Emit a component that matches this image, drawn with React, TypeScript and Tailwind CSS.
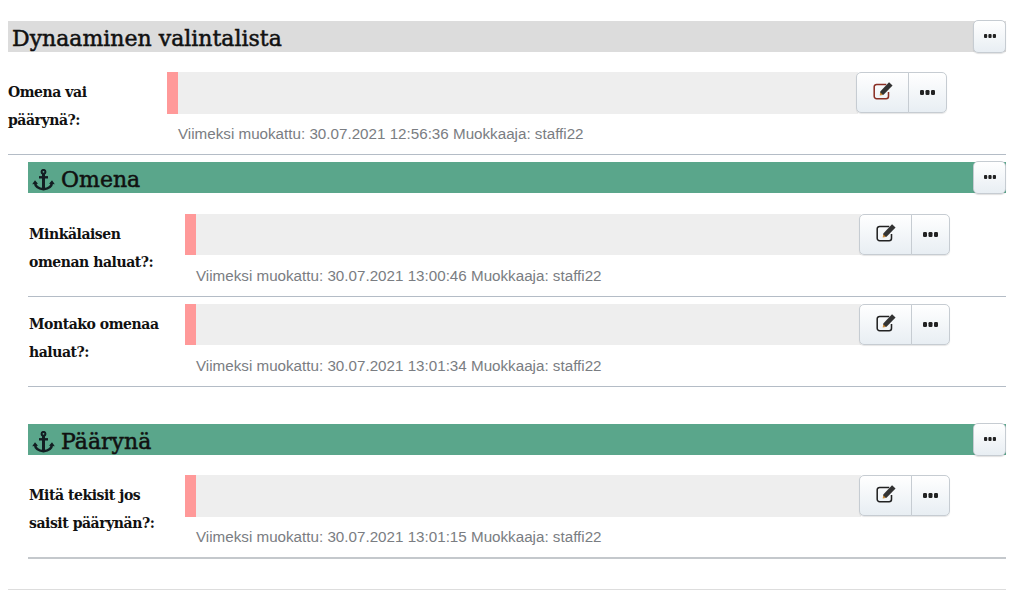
const slab = "font-['DejaVu_Serif',serif]";
const sans = "font-['Liberation_Sans',Arial,sans-serif]";
const btn =
  "flex items-center justify-center border border-[#c6ccd2] bg-gradient-to-b from-white to-[#e8eef3] text-[#222]";

function Dots({ size }: { size: "sm" | "lg" }) {
  const cls = size === "sm" ? "h-[4px] w-[12px]" : "h-[5px] w-[15px]";
  return (
    <svg viewBox="0 0 15 5" className={cls} fill="#222">
      <rect x="0" y="0" width="4" height="5" rx="1.2" />
      <rect x="5.5" y="0" width="4" height="5" rx="1.2" />
      <rect x="11" y="0" width="4" height="5" rx="1.2" />
    </svg>
  );
}

function EditIcon({ accent }: { accent?: boolean }) {
  return (
    <svg viewBox="0 0 20 18" className="-mt-[3px] h-[20px] w-[22px]" fill="none">
      <path
        d="M13 3H4.2A2.2 2.2 0 0 0 2 5.2v8.6A2.2 2.2 0 0 0 4.2 16h8.6a2.2 2.2 0 0 0 2.2-2.2V10"
        stroke={accent ? "#8a2f24" : "#222"}
        strokeWidth="1.4"
      />
      <path d="M15.5 1l3.2 3-8.2 8.4-3.2.2.2-3.2z" fill="#333" />
      <path d="M7 13l.5-2.8 2.4 2.4z" fill="#c98a3a" />
    </svg>
  );
}

function AnchorIcon() {
  return (
    <svg viewBox="0 0 23 22" className="h-[22px] w-[23px] shrink-0" fill="none" stroke="#131d22">
      <circle cx="11.5" cy="2.8" r="1.9" strokeWidth="2" />
      <path d="M11.5 5v15.5" strokeWidth="3" />
      <path d="M7 8.3h9" strokeWidth="2.4" />
      <path d="M3 13.5c.3 4.2 4.5 6.3 8.5 6.8 4-.5 8.2-2.6 8.5-6.8" strokeWidth="2.6" />
      <path d="M0.2 15.2l2.8-4 3 3.6zM22.8 15.2l-2.8-4-3 3.6z" fill="#131d22" stroke="none" />
    </svg>
  );
}

function HeaderMenu() {
  return (
    <button
      type="button"
      className={`${btn} -mt-px h-[33px] w-[33px] shrink-0 rounded-[5px] shadow-[0_1px_1px_rgba(0,0,0,0.12)]`}
    >
      <Dots size="sm" />
    </button>
  );
}

function SectionHeader({ title, bg, anchor }: { title: string; bg: string; anchor?: boolean }) {
  return (
    <div className={`flex h-[31px] items-center ${bg}`}>
      <h2
        className={`${slab} flex flex-1 items-center gap-[6px] pl-1 pt-[4px] text-[22px] text-[#111] [-webkit-text-stroke:0.5px_#111]`}
      >
        {anchor && <AnchorIcon />}
        {title}
      </h2>
      <HeaderMenu />
    </div>
  );
}

function Field({
  label,
  stamp,
  labelW,
  barW,
  barH = "h-[42px]",
  accent,
  line,
}: {
  label: string[];
  stamp: string;
  labelW: string;
  barW: string;
  barH?: string;
  accent?: boolean;
  line: string;
}) {
  return (
    <div className={line}>
      <div className="flex">
        <div className={`${labelW} shrink-0 pt-[6px] ${slab} text-[14px] font-bold leading-[28px] tracking-[-0.45px] text-[#111]`}>
          {label.map((l) => (
            <div key={l}>{l}</div>
          ))}
        </div>
        <div>
          <div className="flex h-[42px] items-start">
            <div className={`${barW} ${barH} shrink-0 border-l-[11px] border-[#ff9999] bg-[#eeeeee]`} />
            <div className="-ml-[2px] flex h-[41px] shrink-0 rounded-[5px] shadow-[0_1px_1px_rgba(0,0,0,0.1)]">
              <button type="button" className={`${btn} w-[53px] rounded-l-[5px]`}>
                <EditIcon accent={accent} />
              </button>
              <button type="button" className={`${btn} -ml-px w-[39px] rounded-r-[5px]`}>
                <Dots size="lg" />
              </button>
            </div>
          </div>
          <p className={`${sans} mt-[11px] pl-[11px] text-[15.2px] leading-[17px] text-[#7a7d82]`}>
            Viimeksi muokattu: {stamp} Muokkaaja: staffi22
          </p>
        </div>
      </div>
    </div>
  );
}

export default function App() {
  return (
    <div className="h-[590px] w-[1020px] overflow-hidden bg-white pl-2 pr-[14px] pt-[21px]">
      <SectionHeader title="Dynaaminen valintalista" bg="bg-[#dcdcdc]" />
      <div className="mt-5">
        <Field
          label={["Omena vai", "päärynä?:"]}
          stamp="30.07.2021 12:56:36"
          labelW="w-[159px]"
          barW="w-[691px]"
          accent
          line="h-[83px] border-b border-[#b4bcc6]"
        />
      </div>

      <div className="ml-5 mt-[7px]">
        <SectionHeader title="Omena" bg="bg-[#5aa68b]" anchor />
        <div className="mt-[21px]">
          <Field
            label={["Minkälaisen", "omenan haluat?:"]}
            stamp="30.07.2021 13:00:46"
            labelW="w-[157px] pl-px"
            barW="w-[676px]"
            barH="h-[41px]"
            line="h-[83px] border-b border-[#b4bcc6]"
          />
        </div>
        <div className="mt-[7px]">
          <Field
            label={["Montako omenaa", "haluat?:"]}
            stamp="30.07.2021 13:01:34"
            labelW="w-[157px] pl-px"
            barW="w-[676px]"
            barH="h-[41px]"
            line="h-[83px] border-b border-[#b4bcc6]"
          />
        </div>

        <div className="mt-[37px]">
          <SectionHeader title="Päärynä" bg="bg-[#5aa68b]" anchor />
        </div>
        <div className="mt-[20px]">
          <Field
            label={["Mitä tekisit jos", "saisit päärynän?:"]}
            stamp="30.07.2021 13:01:15"
            labelW="w-[157px] pl-px"
            barW="w-[676px]"
            line="h-[84px] border-b-2 border-[#c4c8cc]"
          />
        </div>
      </div>
      <div className="mt-[30px] border-b border-[#dddddd]" />
    </div>
  );
}
